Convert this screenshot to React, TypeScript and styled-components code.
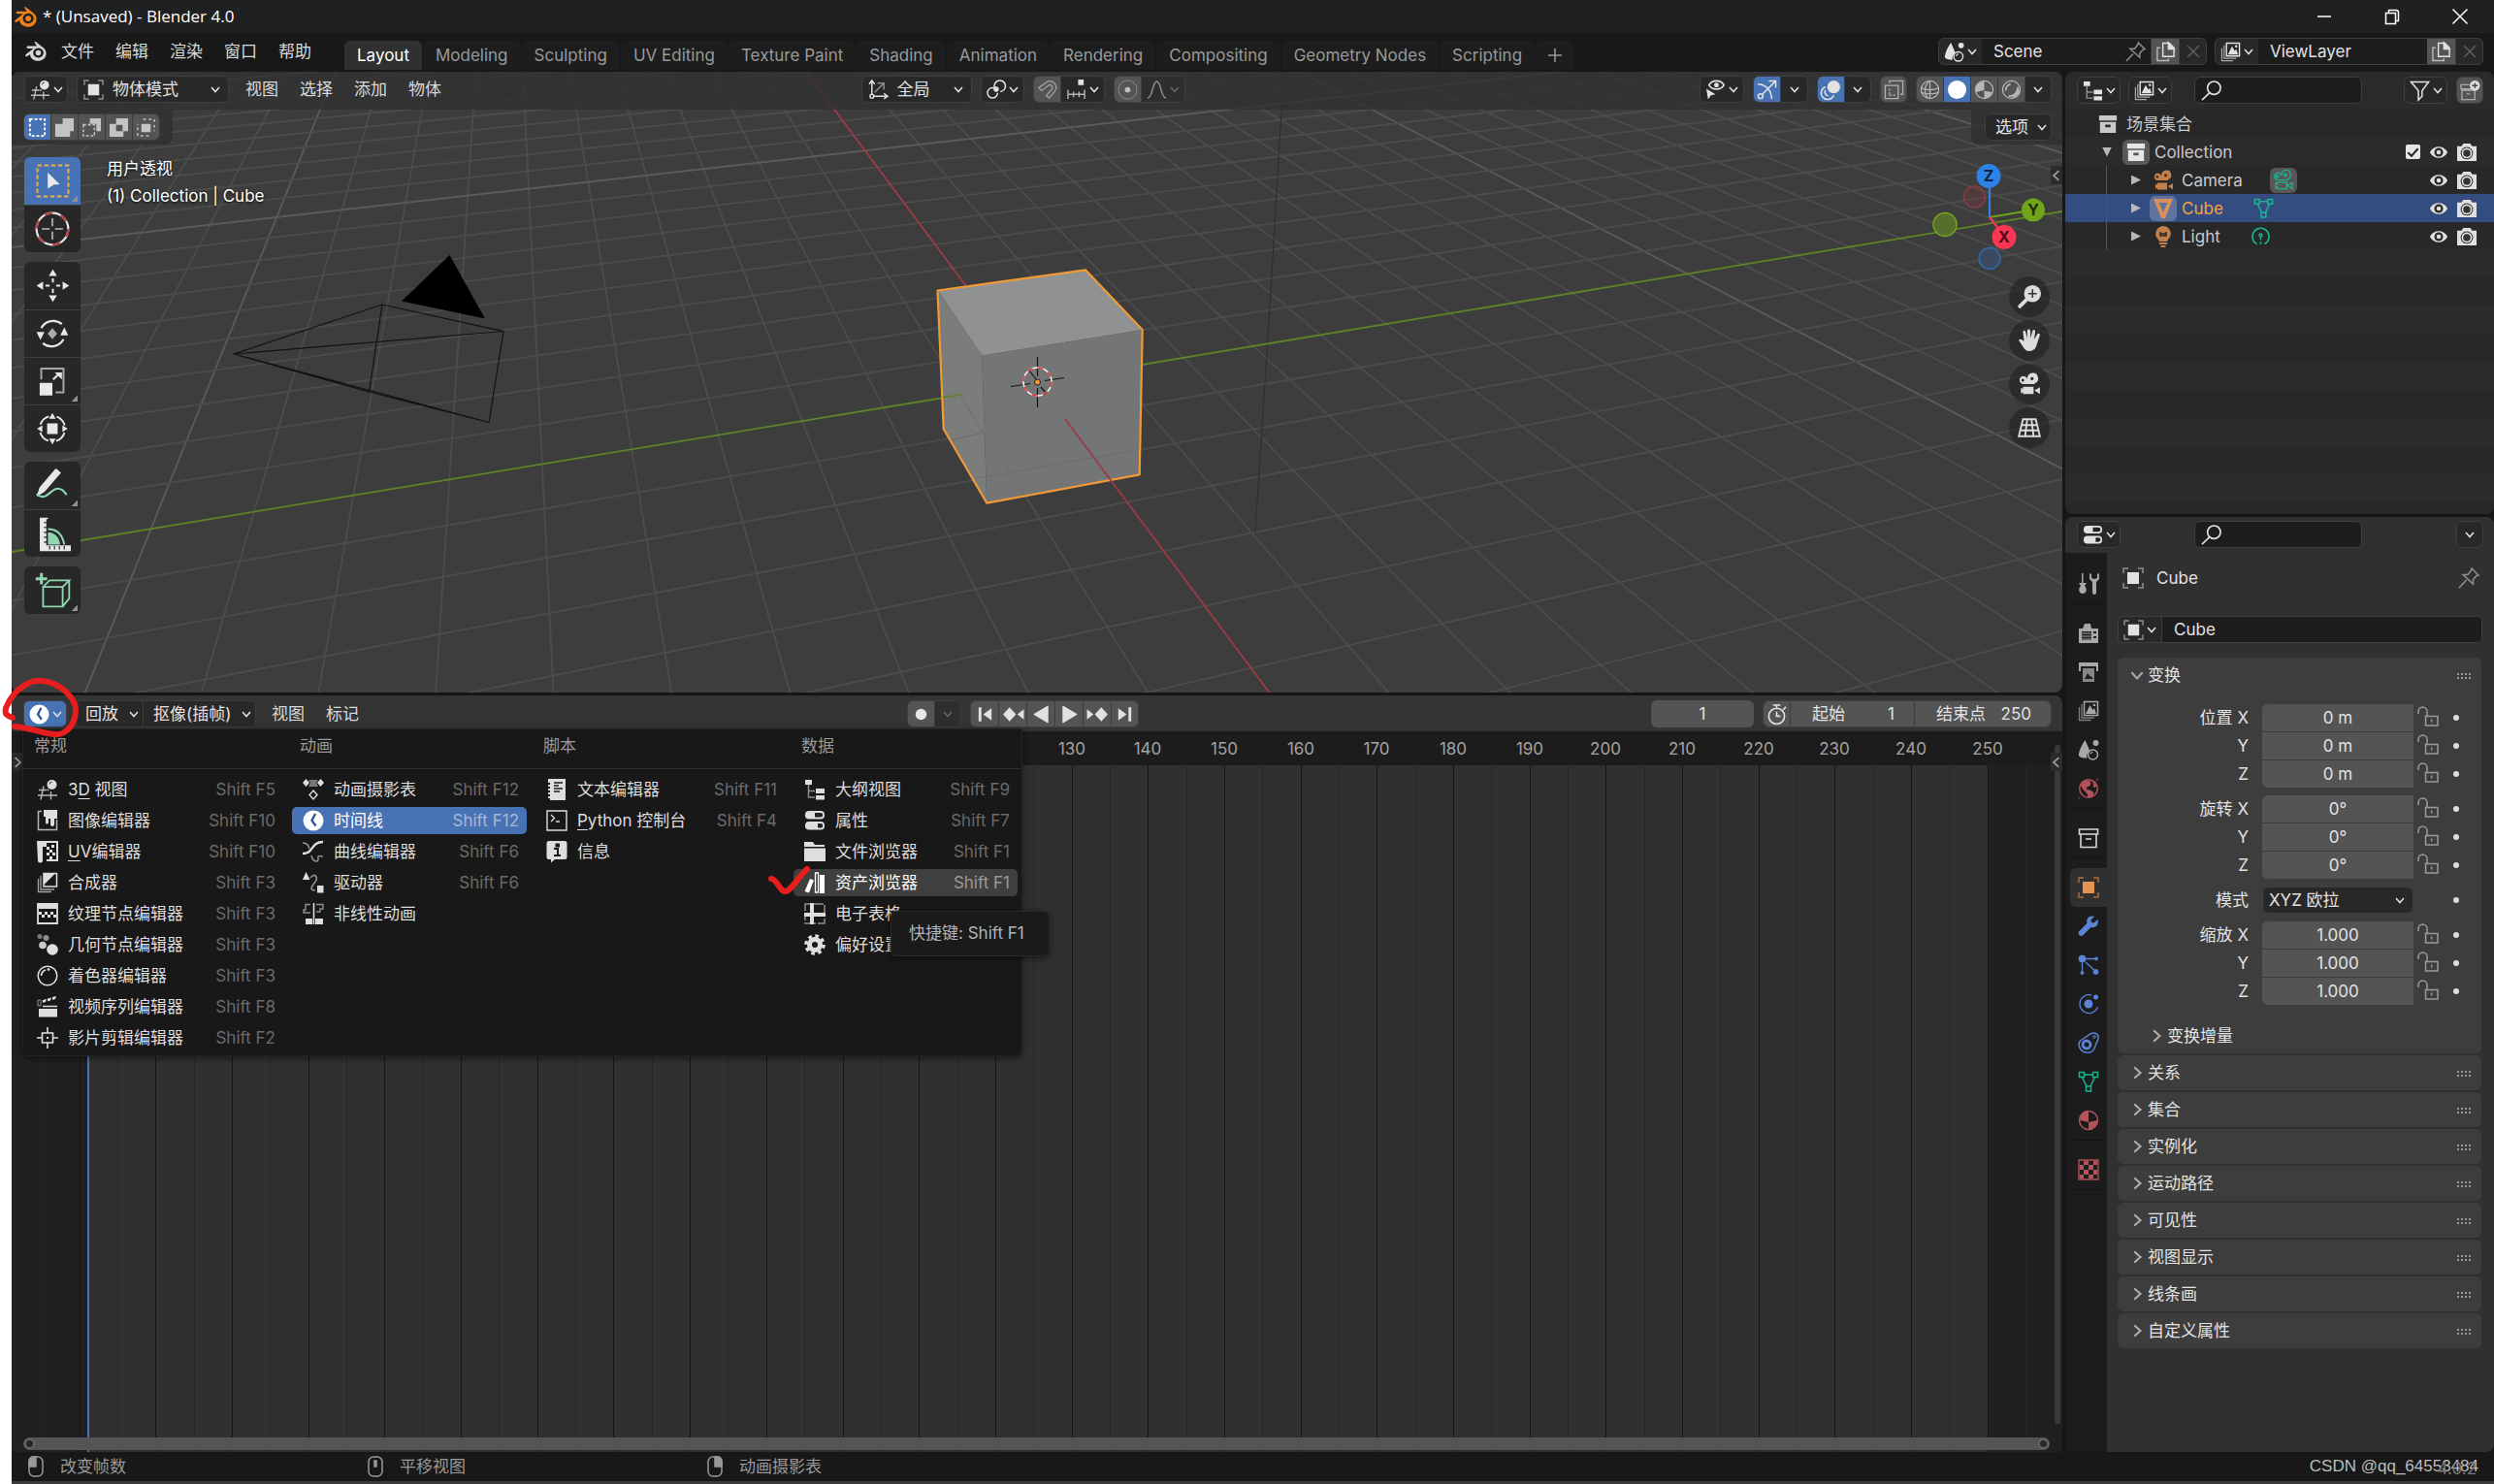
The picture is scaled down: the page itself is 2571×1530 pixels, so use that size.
import React from 'react';
import styled, { createGlobalStyle, css } from 'styled-components';

const GlobalStyle = createGlobalStyle`
  * { box-sizing: border-box; }
  body { margin: 0; background: #fff; }
  body, button, input, select {
    font-family: Inter, "Noto Sans CJK SC", sans-serif;
    font-size: 17px;
    line-height: 24px;
  }
  button, input, select { margin: 0; padding: 0; border: 0; color: inherit; background: none; outline: 0; }
`;

/* ---------- icons, drawn on a 22 unit grid ---------- */

const G = '#8f8f8f';
const F = 'currentColor';

const CameraShape = ({ outline }: { outline?: boolean }) => (
  <g fill={outline ? 'none' : F} stroke={outline ? F : 'none'} strokeWidth="1.3" fillRule="evenodd">
    <path d="M14 0.5a5 5 0 0 1 2 9.7v.8H4.500a3.800 3.800 0 1 1 4.600-4.800A5 5 0 0 1 14 .5zM13.500 4.300a1.500 1.500 0 1 0 .01 0zM4.800 6a1.300 1.300 0 1 0 .01 0z" />
    <path d="M5 13.500h10v7H5v-2l-2 1.500v-5.500l2 1zM15.800 17l5.200-3v6.500z" />
  </g>
);

const StackShape = () => (
  <g fill="none" stroke={F}>
    <path d="M6.500 1.500h14v14h-14z" strokeWidth="1.500" />
    <path d="M8 14l4.500-9 3 5 1.500-2 2 6z" fill={F} stroke="none" />
    <circle cx="17" cy="5" r="1.300" fill={F} stroke="none" />
    <path d="M4 4v14h13M1.500 7v13.500h12" stroke={F} opacity=".7" strokeWidth="1.300" />
  </g>
);

const SceneShape = () => (
  <g>
    <path d="M7.500 1l4.800 11a6 6 0 0 0-2.800 7.500C4 20 .8 18 .8 16 2 10 4 6 7.500 1z" fill={F} />
    <circle cx="18.500" cy="4" r="3" fill={F} />
    <circle cx="15.500" cy="16" r="5" fill="none" stroke={F} strokeWidth="1.500" />
    <path d="M13 15.500a2.500 2.500 0 0 1 2.500-2" fill="none" stroke={F} strokeWidth="1.200" />
  </g>
);

const Brackets = ({ stroke = G }: { stroke?: string }) => (
  <path d="M1 6V1h5M16 1h5v5M21 16v5h-5M6 21H1v-5" fill="none" stroke={stroke} strokeWidth="1.500" />
);

const icons: Record<string, React.ReactNode> = {
  view3d: (
    <g>
      <circle cx="15.500" cy="6" r="5" fill={F} />
      <path d="M13 5.500A3 3 0 0 1 15.500 3" fill="none" stroke="#222" />
      <path d="M2 11.500h8M1 17h20M7 7.500L4 21.500M14.500 13v8.500M10.500 11.500h2" fill="none" stroke={F} opacity=".8" strokeWidth="1.400" />
    </g>
  ),
  object: <g><Brackets /><path d="M5 5h12v12H5z" fill={F} /></g>,
  objectTab: <g><Brackets stroke="#a96c3c" /><path d="M5 5h12v12H5z" fill={F} /></g>,
  orient: (
    <g fill="none" stroke={F} strokeWidth="1.500">
      <path d="M4 16V2M1 5l3-4 3 4M6 18h14M17 15l4 3-4 3" /><circle cx="4" cy="18" r="2" />
      <path d="M7 14l9-9M10 4h7v7" stroke={G} />
    </g>
  ),
  pivot: (
    <g fill="none" stroke={F} strokeWidth="1.600">
      <path d="M10 9.500a5.500 5.500 0 1 0 3 5M10 9.500a6 6 0 1 1 6 3.500" /><circle cx="11.500" cy="10.500" r="2" fill={F} />
    </g>
  ),
  magnet: (
    <path d="M2 9l8-6c6-4 14 3 9 10l-6 7-3-2.500 6-7c2-3-1-6-4-4L5 12z" fill="none" stroke="#a0a0a0" strokeWidth="1.400" />
  ),
  snap: (
    <g fill={F}><path d="M13 0h6v6h-6z" /><path d="M2 11v10M8 13v6M14 13v6M20 11v10M2 16h18" stroke={F} opacity=".75" strokeWidth="1.500" fill="none" /></g>
  ),
  prop: <g><circle cx="11" cy="11" r="10" fill="none" stroke="#8a8a8a" /><circle cx="11" cy="11" r="3" fill="#c0c0c0" /></g>,
  curve: <path d="M1 20c6 0 5-18 10-18s4 18 10 18" fill="none" stroke="#8f8f8f" strokeWidth="1.600" />,
  vis: (
    <g><path d="M4 6c3-6 13-6 16 0-3 6-13 6-16 0z" fill="none" stroke={F} strokeWidth="1.700" /><circle cx="12" cy="6" r="2.600" fill={F} /><path d="M1 10l10 6-5 1-3 4.500z" fill={F} /></g>
  ),
  gizmo: (
    <g fill="none" stroke={F} strokeWidth="1.600"><path d="M6 16L20 2M13 1.500h7.500V9M1 5c8 0 15 6 15 16" /><circle cx="4" cy="18" r="2.500" /></g>
  ),
  overlay: (
    <g><circle cx="14" cy="8" r="7" fill={F} /><path d="M5 8a7 7 0 1 0 9 9M8 17.500a4 4 0 0 1-3-6" fill="none" stroke={F} strokeWidth="1.600" /></g>
  ),
  xray: (
    <g fill="none" stroke="#b0b0b0" strokeWidth="1.400"><path d="M1.500 6.500h14v14h-14zM6 4V1.500h14.500V16H18" /><path d="M6 10v7M6 17h6" strokeDasharray="2 2" /></g>
  ),
  wire: (
    <g fill="none" stroke="#b5b5b5" strokeWidth="1.300"><circle cx="11" cy="11" r="9.500" /><path d="M1.500 9c5 3 14 3 19 0M1.500 14c5 2 14 2 19 0M11 1.500v19M10 2C4 7 5 17 9 20" /></g>
  ),
  solid: <circle cx="11" cy="11" r="10" fill="#fff" />,
  matprev: (
    <g><circle cx="11" cy="11" r="9.500" fill="none" stroke="#b5b5b5" strokeWidth="1.300" /><path d="M11 1.500v10l-9 2A9.500 9.500 0 0 1 11 1.500zM11 12l9 2a9.500 9.500 0 0 1-9 6.500z" fill="#b5b5b5" /></g>
  ),
  rendered: (
    <g><circle cx="11" cy="11" r="9.500" fill="none" stroke="#b5b5b5" strokeWidth="1.300" /><path d="M5 12a6.500 6.500 0 0 1 5-7M8 18c6 0 10-4 10-10M12 19c4-1 7-4 7-8" fill="none" stroke="#b5b5b5" strokeWidth="2" /></g>
  ),
  scene: <SceneShape />,
  layers: <StackShape />,
  newdoc: (
    <g fill="none" stroke={F} strokeWidth="1.500"><path d="M8 1.500h7l5 5V16H8z" /><path d="M14 1v7h6z" fill={F} /><path d="M5 6.500H2v14h12V18" opacity=".7" /></g>
  ),
  close: <path d="M4 4l14 14M18 4L4 18" stroke="#666" strokeWidth="1.400" />,
  pin: (
    <g fill="none" stroke="#8f8f8f" strokeWidth="1.500"><path d="M14 1l7 7-2 .5-3.500 4V17L5 7.500h5L13.500 3zM8.500 13L1 21" /></g>
  ),
  tree: (
    <g fill={F}><path d="M1 1h7v5H1zM12 10h9v5h-9zM12 17h9v4.500h-9z" /><path d="M4.500 6v13H11M4.500 12.500H11" fill="none" stroke={G} strokeWidth="1.500" /></g>
  ),
  search: <g fill="none" stroke={F} strokeWidth="1.700"><circle cx="14" cy="8" r="7" /><path d="M9 13.500L1 21" /></g>,
  filter: <path d="M1.500 1.500h19L13.500 11v6l-4 4V11z" fill="none" stroke={F} strokeWidth="1.600" />,
  newcol: (
    <g fill="none" stroke="#aaa" strokeWidth="1.400"><path d="M2 10.500h14v10H2zM12 9H1V4.500h9M7 14.500h4" /><circle cx="16" cy="5.500" r="5.500" fill="#ddd" stroke="none" /><path d="M16 2.500v6M13 5.500h6" stroke="#444" /></g>
  ),
  collection: (
    <g fill={F} fillRule="evenodd"><path d="M1 1h20v6H1z" /><path d="M2 8.500h18V21H2zm6 3v3h6v-3z" /></g>
  ),
  collectionTab: (
    <g fill="none" stroke={F} strokeWidth="1.600"><path d="M1.500 2h19v5h-19zM3 7v13.500h16V7M8 12h6" /></g>
  ),
  camera: <CameraShape />,
  cameraData: <CameraShape outline />,
  meshObj: <path d="M1 1h20l-8 20H9zM6.500 5L11 15l4.500-10z" fill={F} fillRule="evenodd" />,
  mesh: (
    <g fill="none" stroke={F} strokeWidth="1.600"><path d="M1.500 1.500h5v5h-5zM15.500 1.500h5v5h-5zM8.500 16h5v5h-5zM6.500 4h9M4.500 6.500L9 16M17.500 6.500L13 16" /></g>
  ),
  bulb: (
    <g fill={F}><path d="M11 0a8 8 0 0 1 5 14l-1 2H7l-1-2A8 8 0 0 1 11 0z" /><path d="M7 18h8M8.500 21h5" stroke={F} strokeWidth="1.800" /><path d="M8 6v4h6V6M8 8h6" fill="none" stroke="#282828" strokeWidth="1.400" /></g>
  ),
  lightData: (
    <g fill="none" stroke={F} strokeWidth="1.600"><path d="M7 19.500a9 9 0 1 1 8 0" /><circle cx="11" cy="10" r="1.500" /><path d="M11 12v9.500" strokeDasharray="3 2" /></g>
  ),
  eye: (
    <g><path d="M1 11c4-8.500 16-8.500 20 0-4 8.500-16 8.500-20 0z" fill={F} /><circle cx="11" cy="11" r="5" fill="#2a2a2a" /><circle cx="11" cy="11" r="2.500" fill={F} /></g>
  ),
  shot: (
    <g><path d="M0 4h5l2-3h8l2 3h5v17H0z" fill={F} /><circle cx="11" cy="12" r="7" fill="#333" /><circle cx="11" cy="12" r="5" fill="none" stroke={F} strokeWidth="1.800" /></g>
  ),
  props: (
    <g fill={F}><rect x="1" y="1" width="20" height="8.500" rx="4" /><rect x="1" y="12" width="20" height="8.500" rx="4" /><path d="M11 3h6a2.200 2.200 0 0 1 0 4.500h-6zM14 14h3a2.200 2.200 0 0 1 0 4.500h-3z" fill="#222" /></g>
  ),
  tool: (
    <g fill={F}><path d="M4 0h1.500v10H9l-2 3c3 3 2 8-2 8s-5-5-2-8l-2-3h3z" /><path d="M12 0v6l3 3v11a2 2 0 0 0 4 0V9l3-3V0l-2 1v4l-3 1-3-1V1z" /></g>
  ),
  render: (
    <g fillRule="evenodd"><path d="M1 6h4l2-5h6l1 5h7v15H1zM4 9v9h10V9z" fill={F} /><path d="M4 11h10M4 14h10M4 17h10" stroke={F} /><path d="M16 10h3M16 15h3" stroke="#1d1d1d" strokeWidth="2" /></g>
  ),
  output: (
    <g fill={F}><path d="M1 1h20v9h-2V5H3v5H1z" /><path d="M5 7h12v14H5z" opacity=".75" /><path d="M7 18l3-6 3 4 1-1 1.500 3z" fill="#1d1d1d" /></g>
  ),
  world: (
    <g><circle cx="11" cy="11" r="9.300" fill="none" stroke={F} strokeWidth="1.500" /><path d="M3 7l5-4 5 1-1 4-3 1-1 3 4 1 4 2-1 4-4 1-1-4-4-4zM16 4l3 4-2 2zM2 20l-1 1.500M19 3l2-2.500" fill={F} stroke={F} /></g>
  ),
  wrench: <path d="M20.500 4l-4 3.500-2.500-.5-.5-2.500L17 .8c-5-1.500-9 2-7.500 7L1 16.500c-1.500 2.500 1.500 5.500 4 4L13.500 12c5 1.500 8.500-3 7-8z" fill={F} />,
  particles: (
    <g fill={F} stroke={F}><circle cx="4.500" cy="4.500" r="3.500" /><path d="M4.500 4.500h15M4.500 4.500v14M8 8l11 10" fill="none" strokeWidth="1.300" /><circle cx="19" cy="4.500" r="1.500" /><circle cx="4.500" cy="19" r="1.500" /><circle cx="18.500" cy="18" r="2.500" /></g>
  ),
  physics: (
    <g><circle cx="11" cy="11" r="4.500" fill={F} /><circle cx="18.500" cy="4" r="2.500" fill={F} /><path d="M14 2A9.500 9.500 0 1 0 20.500 14" fill="none" stroke={F} strokeWidth="1.300" /></g>
  ),
  constraint: (
    <g fill="none" stroke={F}><path d="M2.500 9L13 2c5-3 9 1 8 5l-4 10c-3 6-11 5-14 1s-2-7-.5-9z" strokeWidth="1.500" /><circle cx="9" cy="13" r="4" strokeWidth="2.800" /><circle cx="17" cy="5" r="1.300" /></g>
  ),
  material: (
    <g><circle cx="11" cy="11" r="9.500" fill="none" stroke={F} strokeWidth="1.500" /><path d="M11 1.500V13l-9-2A9.500 9.500 0 0 1 11 1.500zM11 13l9-2a9.500 9.500 0 0 1-9 9.500z" fill={F} /></g>
  ),
  texture: (
    <g><path d="M1 1h20v20H1z" fill="none" stroke={F} strokeWidth="1.300" /><path d="M6 2h5v4H6zM16 2h4v4h-4zM2 6h4v5H2zM11 6h5v5h-5zM6 11h5v5H6zM16 11h4v5h-4zM2 16h4v4H2zM11 16h5v4h-5z" fill={F} /></g>
  ),
  lock: <path d="M1 7V4.500a4.500 4.500 0 0 1 9 0V9M8.500 9.500h12.500v9.500H8.500zM14.700 12.500v3" fill="none" stroke="#9a9a9a" strokeWidth="1.500" />,
  image: (
    <g><path d="M5 1.500H1.500v19h19V10" fill="none" stroke={F} opacity=".8" strokeWidth="1.500" /><path d="M7 0h14v9h-3v6a1.500 1.500 0 0 1-4 0V9h-2v4a1.500 1.500 0 0 1-3 0V7H7z" fill={F} /></g>
  ),
  uv: (
    <g fill={F}><path d="M0 0h22v21H10v-2h10V2H10v4H6v14a1.500 1.500 0 0 1-5 0z" /><path d="M10 6h3v3h-3zM15 4h3v3h-3zM13 9h3v3h-3zM10 12h3v3h-3zM16 12h3v3h-3zM13 16h3v3h-3z" /></g>
  ),
  comp: (
    <g fill="none" stroke={F}><path d="M7 1.500h13.500V15H7z" strokeWidth="1.500" /><path d="M7 13.500V1.500h12z" fill={F} stroke="none" /><path d="M4 4v14h14M1.500 7v13.500H15" opacity=".7" strokeWidth="1.300" /></g>
  ),
  texnode: (
    <g><path d="M1 1h20v20H1z" fill="none" stroke={F} strokeWidth="1.800" /><path d="M1 1h20v5H1z" fill={F} /><path d="M2 9h3v3H2zM8 9h3v3H8zM14 9h3v3h-3zM5 12h3v3H5zM11 12h3v3h-3zM17 12h3v3h-3z" fill={F} /></g>
  ),
  geonode: (
    <g fill={F}><circle cx="3" cy="2.500" r="2.500" opacity=".5" /><circle cx="9.500" cy="4" r="3" opacity=".6" /><circle cx="6" cy="11.500" r="3.800" opacity=".9" /><circle cx="16" cy="16" r="5.800" /></g>
  ),
  shader: (
    <g fill="none" stroke={F}><circle cx="11" cy="11" r="9.800" strokeWidth="1.500" /><path d="M4.500 11A7 7 0 0 1 9 5" strokeWidth="1.800" /><circle cx="12" cy="4.500" r="1" fill={F} /></g>
  ),
  seq: (
    <g fill={F}><path d="M2 13h19v8.500H2z" /><path d="M6 10.500h15" stroke={F} strokeWidth="1.500" /><path d="M1 4h3v6H1z" fill="none" stroke={G} /><path d="M6 4l4-1-1 3-3 1zM11 2.500l4-1-1 3-3 1zM16 1l4-1-1 3-3 1z" /></g>
  ),
  clip: (
    <g fill="none" stroke={F} strokeWidth="1.600"><path d="M5.500 6h11v10h-11zM11 0v6M11 16v6M0 11h5.500M16.500 11H22" /><path d="M10 10h2v2h-2z" fill={F} stroke="none" /></g>
  ),
  dope: (
    <g fill={F}><path d="M3.500 0L7 4 3.500 8 0 4zM18.500 0L22 4l-3.500 4L15 4z" /><path d="M6 1h10l-2 3 2 4H6l2-4z" fill="#777" /><path d="M11 12l4 4.500-4 4.500-4-4.500z" fill="none" stroke={F} strokeWidth="1.400" /></g>
  ),
  time: <g><circle cx="11" cy="11" r="10.500" fill="#fff" /><path d="M13 4L9.500 11l4 5.500" fill="none" stroke="#32549a" strokeWidth="2.400" /></g>,
  graph: (
    <g fill="none" stroke={F}><path d="M0 13c12 0 8-12 21-12" strokeWidth="2.400" /><path d="M0 2c5 0 6 3 7 6M9 15c2 8 8 7 7 3s2-2 5-2" stroke={G} strokeWidth="1.600" /></g>
  ),
  driver: (
    <g fill={F}><path d="M3.500 0L7.500 8H0zM15 14h6.500v7.500H15z" /><path d="M8 6c5-6 8 0 5 4s-7 9 0 9" fill="none" stroke={G} strokeWidth="1.700" /></g>
  ),
  nla: (
    <g><path d="M8 1.500H3V7H1v3h7M14 1.500h7V6h-3v3h-4" fill="none" stroke={G} strokeWidth="1.400" /><path d="M3 16h7v6H3zM13 16h8v6h-8zM10.700 0h1.600v22h-1.600z" fill={F} /></g>
  ),
  text: (
    <g fill={F}><path d="M2 0h18v22H4v-2H2v-2h2v-2H2v-2h2v-2H2v-2h2V8H2V6h2V4H2z" /><path d="M8 4h9M8 7h5M8 10h9M8 13h6" stroke="#1a1a1a" strokeWidth="1.300" /></g>
  ),
  console: (
    <g fill="none" stroke={F}><path d="M1 1h20v20H1z" strokeWidth="1.400" /><path d="M5 5l3.500 3.500L5 12M10 12h4" strokeWidth="1.300" /></g>
  ),
  info: (
    <g fill={F}><path d="M3 0h16a2.500 2.500 0 0 1 2.500 2.500v14A2.500 2.500 0 0 1 19 19H9l-4 3.500V19H3A2.500 2.500 0 0 1 .5 16.500v-14A2.500 2.500 0 0 1 3 0z" /><path d="M8 8h4v7M8 15h7M10.500 3.500h2.500v2h-2.500z" fill="none" stroke="#1a1a1a" strokeWidth="2" /></g>
  ),
  file: <g fill={F}><path d="M0 1h9l2 3h10v2H0z" /><path d="M0 7.500h22V21H0z" /></g>,
  asset: (
    <g fill={F}><path d="M16 3h5v19h-5z" /><path d="M11.500 1h3v20h-3z" fill="none" stroke={F} strokeWidth="1.300" /><path d="M6 7l4 1.500L5 21.500 .5 20z" /></g>
  ),
  sheet: (
    <g><path d="M1 8V1h20v20H1v-7" fill="none" stroke={G} strokeWidth="1.500" strokeDasharray="12 2" /><path d="M6 0h4v10h12v4H10v8H6v-8H0v-4h6z" fill={F} /></g>
  ),
  gear: (
    <g fill="none" stroke={F}><circle cx="11" cy="11" r="5.500" strokeWidth="5" /><circle cx="11" cy="11" r="9" strokeWidth="3.500" strokeDasharray="3.600 3.470" /></g>
  ),
  stopwatch: (
    <g fill="none" stroke={F} strokeWidth="1.700"><circle cx="11" cy="13" r="8.500" /><path d="M11 4V1M7 1h8M18 6l3-3M11 8v5h4" /></g>
  ),
  zoomNav: (
    <g><circle cx="14" cy="8" r="8" fill={F} /><path d="M10 12l-8 8" stroke={F} strokeWidth="3.500" strokeLinecap="round" /><path d="M14 4v8M10 8h8" stroke="#333" strokeWidth="1.400" /></g>
  ),
  hand: (
    <path d="M1 11c1-2 3-1 5 1L5 3c0-2 2-2 2.500 0L9 9V2c0-2 3-2 3 0v7l2-7c.5-2 3-1 2.500 1L15.500 10l3-5c1-1.500 3-.5 2.500 1L18 15c-1 4-3 6-7 6-5 0-6-5-10-10z" fill={F} />
  ),
  grid: <path d="M5 3h12l4 16H1zM9 3L7 19M13 3l2 16M4 8.500h14M2.500 13.500h17" fill="none" stroke={F} strokeWidth="1.700" />,
  setNew: <path d="M3 2h16v18H3z" fill="none" stroke="#fff" strokeWidth="2" strokeDasharray="3 2" />,
  setExtend: <path d="M9 1h12v14h-4v6H1V7h8z" fill="#c4c4c4" />,
  setSub: <g><path d="M9 1h12v14h-5V7H9z" fill="#c4c4c4" /><path d="M2 8h12v12H2z" fill="none" stroke="#c4c4c4" strokeWidth="1.600" strokeDasharray="3 2" /></g>,
  setDiff: <path d="M8 1h13v14h-5v6H1V7h7zM8 8v7h7V8z" fill="#c4c4c4" fillRule="evenodd" />,
  setAnd: <g><path d="M6 7h10v9H6z" fill="#c4c4c4" /><path d="M8 2h12v13M14 20H2V7" fill="none" stroke="#c4c4c4" strokeWidth="1.600" strokeDasharray="3 3" /></g>,
  mouseL: <g fill="none" stroke={F} strokeWidth="1.500"><rect x="4" y="1" width="14" height="20" rx="5" /><path d="M4 11V5a4 4 0 0 1 4-4h3v10z" fill={F} /></g>,
  mouseM: <g fill="none" stroke={F} strokeWidth="1.500"><rect x="4" y="1" width="14" height="20" rx="5" /><rect x="10" y="5" width="2" height="6" fill={F} /></g>,
  mouseR: <g fill="none" stroke={F} strokeWidth="1.500"><rect x="4" y="1" width="14" height="20" rx="5" /><path d="M18 11V5a4 4 0 0 0-4-4h-3v10z" fill={F} /></g>,
  record: <circle cx="11" cy="11" r="6" fill={F} />,
  first: <path d="M4 3.500h3v15H4zM18 4.500v13L9 11z" fill={F} />,
  prevKey: <path d="M7 3.500l7 7.500-7 7.500L0 11zM22.500 5.500v11L15.500 11z" fill={F} />,
  playBack: <path d="M18 2v18L3 11z" fill={F} strokeLinejoin="round" stroke={F} />,
  play: <path d="M4 2v18l15-9z" fill={F} strokeLinejoin="round" stroke={F} />,
  nextKey: <path d="M15 3.500l7 7.500-7 7.500L8 11zM-.5 5.500v11L6.500 11z" fill={F} />,
  last: <path d="M15 3.500h3v15h-3zM4 4.500v13L13 11z" fill={F} />,
  blender: (
    <g fillRule="evenodd" fill={F}>
      <path d="M9.500 1.500c.8-.8 2-.2 2.500.4l7 5.600c3.500 3 3.500 8.500 0 11.300-3.500 2.800-9 2.700-12-.3-1.300-1.300-2-3-2-4.500l-2.800 2c-1.500.8-2.700-.7-1.500-1.900L8.500 8H3c-2 0-2-2.400 0-2.400h9zM13.500 7.500a5.300 5 0 1 0 .01 0z" />
      <circle cx="13.500" cy="12.500" r="2.800" />
    </g>
  ),
  min: <path d="M4 11h14" stroke="#fff" strokeWidth="1.500" />,
  restore: <path d="M4.500 7.500h10v11h-10zM7.500 7V4.500h7.500a2.500 2.500 0 0 1 2.500 2.500v8.500H15" fill="none" stroke="#fff" strokeWidth="1.500" />,
  quit: <path d="M3.500 3.500l15 15M18.500 3.500l-15 15" stroke="#fff" strokeWidth="1.500" />,
  /* tool shelf */
  tSelect: <g><path d="M2 2h18v18H2z" fill="none" stroke="#f0b04a" strokeWidth="1.100" strokeDasharray="2.500 1.500" /><path d="M8 6l7 7-3.500.3L8 15.500z" fill={F} /></g>,
  tCursor: <g fill="none"><circle cx="11" cy="11" r="9" stroke="#e8e8e8" strokeWidth="1.200" /><circle cx="11" cy="11" r="9" stroke="#b8474c" strokeWidth="1.300" strokeDasharray="4.700 4.700" /><path d="M11 5v4.500M11 12.500V17M5 11h4.500M12.500 11H17" stroke="#bbb" strokeWidth=".9" /></g>,
  tMove: <g fill={F}><path d="M11 1l2.500 4h-5zM11 21l2.500-4h-5zM1 11l4-2.500v5zM21 11l-4-2.500v5z" /><path d="M11 6.500V9M11 13v2.500M6.500 11H9M13 11h2.500" stroke={F} strokeWidth="1.200" /></g>,
  tRotate: <g fill={F}><path d="M4 7.500A8.500 8.500 0 0 1 17 5M18 14.500A8.500 8.500 0 0 1 5 17" fill="none" stroke={F} strokeWidth="1.300" /><path d="M1 10h5l-2.500 5zM16 12h5l-2.500-5z" /><path d="M11 7.500l3 3.500-3 3.500L8 11z" fill="#aaa" /></g>,
  tScale: <g fill={F}><path d="M3 12h8v8H3z" /><path d="M4 10V3h14v15h-5" fill="none" stroke="#a8a8a8" strokeWidth="1.200" /><path d="M11.500 10l3-3" stroke={F} strokeWidth="1.300" /><path d="M12.500 5.500H17V10z" /></g>,
  tTransform: <g fill={F}><circle cx="11" cy="11" r="8.500" fill="none" stroke={F} strokeWidth="1.200" strokeDasharray="8 5.350" strokeDashoffset="-2.700" /><path d="M7.500 7.500h7v7h-7zM11 .5l2.200 3.800H8.800zM11 21.500l2.200-3.800H8.800zM.8 11l3.500-2.200v4.400zM21.200 11l-3.500-2.200v4.400z" /></g>,
  tDraw: <g fill={F}><path d="M13 1.500l2.500 2L6.500 14l-4 2.500L4 12z" stroke={F} strokeWidth=".6" strokeLinejoin="round" /><path d="M2 15.500c5 5 8-3 12-3 3 0 4 2 5 3.500" fill="none" stroke="#8fd6b2" strokeWidth="1.200" /></g>,
  tMeasure: <g fill={F}><path d="M3 1h5v1H7v16h15v3.500H3z" /><path d="M8 8c6 0 9 4 10 9.500" fill="none" stroke="#8fd6b2" strokeWidth="1.200" /><path d="M8 10c4 0 7 3 7.500 7.500H8z" fill="#8fd6b2" /><path d="M5.500 4h2M5.500 7h2M5.500 10h2M5.500 13h2M5.500 16h2M9 18.500v2M12 18.500v2M15 18.500v2M18 18.500v2" stroke="#222" strokeWidth=".7" /></g>,
  tAdd: <g fill="none" stroke="#8fd6b2" strokeWidth="1.100"><path d="M5 9h12v12H5zM5 9l4-4h12l-4 4M21 5v11l-4 5" /><path d="M4 .5v7M.5 4h7" strokeWidth="1.800" /></g>,
};

const IconSvg = styled.svg<{ $s: number; $c?: string }>`
  width: ${p => p.$s}px;
  height: ${p => p.$s}px;
  flex: none;
  display: block;
  overflow: visible;
  ${p => p.$c && css`color: ${p.$c};`}
`;
const Icon = ({ n, s = 21, c }: { n: string; s?: number; c?: string }) => (
  <IconSvg viewBox="0 0 22 22" $s={s} $c={c} aria-hidden>{icons[n]}</IconSvg>
);

const ChevSvg = styled.svg<{ $s: number; $turn: number; $c?: string }>`
  width: ${p => p.$s}px;
  height: ${p => p.$s}px;
  flex: none;
  transform: rotate(${p => p.$turn}deg);
  color: ${p => p.$c || 'inherit'};
`;
const Chev = ({ s = 10, turn = 0, c }: { s?: number; turn?: number; c?: string }) => (
  <ChevSvg viewBox="0 0 10 10" $s={s} $turn={turn} $c={c} aria-hidden>
    <path d="M1 3l4 4.500L9 3" fill="none" stroke="currentColor" strokeWidth="1.500" />
  </ChevSvg>
);

/* ---------- shared controls ---------- */

const Group = styled.div<{ $dim?: boolean }>`
  display: flex;
  height: 28px;
  border: 1px solid #3f3f3f;
  border-radius: 6px;
  overflow: hidden;
  background: #282828;
  flex: none;
  ${p => p.$dim && css`background: #2e2e2e; color: #666;`}
`;
const Cell = styled.button<{ $w?: number; $tone?: 'on' | 'grey' | 'dark' }>`
  display: flex;
  align-items: center;
  justify-content: center;
  gap: 3px;
  width: ${p => (p.$w ? `${p.$w}px` : 'auto')};
  flex: none;
  background: ${p => (p.$tone === 'on' ? '#4772b3' : p.$tone === 'grey' ? '#545454' : 'transparent')};
  & + & { border-left: 1px solid #3d3d3d; }
`;
const DropCell = styled(Cell)`
  justify-content: space-between;
  padding: 0 4px 0 10px;
  white-space: nowrap;
`;
const Row = styled.div<{ $gap?: number; $end?: boolean }>`
  display: flex;
  align-items: center;
  gap: ${p => p.$gap ?? 9}px;
  ${p => p.$end && css`justify-content: flex-end;`}
`;
const Menus = styled(Row)`
  gap: 22px;
  margin-left: 8px;
`;
const MenuButton = styled.button`
  white-space: nowrap;
  color: #d9d9d9;
`;
const SelectBox = styled.label<{ $w: number }>`
  position: relative;
  display: flex;
  align-items: center;
  gap: 9px;
  width: ${p => p.$w}px;
  height: 28px;
  padding: 0 8px 0 6px;
  border: 1px solid #3f3f3f;
  border-radius: 6px;
  background: #282828;
  flex: none;
  select { appearance: none; flex: 1; min-width: 0; height: 26px; color: #e2e2e2; }
`;

/* ---------- window chrome ---------- */

const Page = styled.div`
  display: flex;
  flex-direction: column;
  min-height: 100vh;
  margin-left: 12px;
  background: #181818;
  border-bottom: 3px solid #3a3b3b;
  color: #e2e2e2;
`;
const TitleBar = styled.header`
  display: flex;
  align-items: center;
  height: 34px;
  padding: 0 24px 0 3px;
  gap: 6px;
  background: #1e2021;
  font-family: "Open Sans", sans-serif;
  font-size: 17px;
  color: #fff;
`;
const WinButtons = styled.div`
  margin-left: auto;
  display: flex;
  gap: 48px;
`;
const TopBar = styled.nav`
  display: flex;
  height: 40px;
  padding: 0 11px 0 14px;
`;
const FileMenus = styled(Row)`
  gap: 22px;
  height: 38px;
  margin-right: 34px;
`;
const Logo = styled.button`
  margin-right: -7px;
  color: #d5d5d5;
`;
const Tabs = styled.div`
  display: flex;
  gap: 1px;
  height: 30px;
  margin-top: 8px;
`;
const Tab = styled.button<{ $on?: boolean }>`
  padding: 0 13px;
  border-radius: 6px 6px 0 0;
  background: ${p => (p.$on ? '#303030' : '#1d1d1d')};
  color: ${p => (p.$on ? '#fff' : '#999')};
`;
const IdBlocks = styled(Row)`
  margin-left: auto;
  height: 38px;
  gap: 8px;
`;
const IdGroup = styled(Group)`
  width: 277px;
  color: #e2e2e2;
`;
const IdField = styled.input`
  flex: 1;
  min-width: 0;
  padding-left: 12px;
  background: #1d1d1d;
`;
const PinCell = styled(Cell)`
  background: #1d1d1d;
`;

/* ---------- areas ---------- */

const Main = styled.main`
  flex: 1;
  display: flex;
  gap: 3px;
  background: #161616;
`;
const LeftCol = styled.div`
  flex: 1;
  min-width: 0;
  display: flex;
  flex-direction: column;
  gap: 3px;
`;
const RightCol = styled.aside`
  width: 442px;
  flex: none;
  display: flex;
  flex-direction: column;
  gap: 3px;
`;
const Viewport = styled.section`
  position: relative;
  flex: 640 1 0;
  min-height: 640px;
  border-radius: 8px;
  overflow: hidden;
  background: #3d3d3d;
`;
const Backdrop = styled.svg`
  position: absolute;
  inset: 0;
  width: 100%;
  height: 100%;
`;
const Overlaid = styled.div`
  position: relative;
  display: flex;
  flex-direction: column;
`;
const ViewHeader = styled.div`
  display: grid;
  grid-template-columns: 864fr auto 895fr;
  align-items: start;
  height: 39px;
  padding: 4px 11px 0 13px;
  background: rgba(48, 48, 48, 0.8);
`;
const SubHeader = styled.div`
  display: flex;
  justify-content: space-between;
  height: 36px;
`;
const SubBox = styled.div<{ $right?: boolean }>`
  padding: ${p => (p.$right ? '4px 11px 0 14px' : '4px 13px 0 12px')};
  background: rgba(48, 48, 48, 0.8);
  border-radius: ${p => (p.$right ? '0 0 0 8px' : '0 0 8px 0')};
`;
const ViewBody = styled.div`
  display: flex;
  padding: 13px 13px 0;
`;
const Shelf = styled.div`
  display: flex;
  flex-direction: column;
  gap: 10px;
`;
const ShelfGroup = styled.div`
  display: flex;
  flex-direction: column;
  border-radius: 6px;
  overflow: hidden;
`;
const Tool = styled.button<{ $on?: boolean; $more?: boolean }>`
  display: flex;
  align-items: center;
  justify-content: center;
  width: 58px;
  height: 49px;
  background-color: ${p => (p.$on ? '#4772b3' : '#272727')};
  color: #e8e8e8;
  & + & { border-top: 1px solid #3d3d3d; }
  ${p => p.$more && css`
    background-image: linear-gradient(135deg, transparent 50%, #8f8f8f 50%);
    background-size: 6px 6px;
    background-repeat: no-repeat;
    background-position: right 3px bottom 3px;
  `}
`;
const ViewLabel = styled.div`
  margin-left: 27px;
  line-height: 24px;
  color: #fff;
  text-shadow: 0 1px 3px #000;
  p { margin: 0 0 4px; }
`;
const NavButtons = styled.div`
  display: flex;
  flex-direction: column;
  gap: 3px;
  margin: 123px 0 0 auto;
`;
const NavButton = styled.button`
  display: flex;
  align-items: center;
  justify-content: center;
  width: 42px;
  height: 42px;
  border-radius: 50%;
  background: rgba(30, 30, 30, 0.55);
  color: #dcdcdc;
`;
const SideTab = styled.button<{ $top: number; $left?: boolean }>`
  position: absolute;
  top: ${p => p.$top}px;
  ${p => (p.$left ? 'left: 0;' : 'right: 0;')}
  width: 12px;
  height: 19px;
  background: #2b2b2b;
  color: #999;
  display: flex;
  align-items: center;
`;

/* ---------- scene drawing ---------- */

const project = (x: number, y: number) => {
  const u = (y + 10) / 20;
  const v = (x + 10) / 10;
  const w = 1 + 0.233 * u - 0.3575 * v;
  return [(1425.6 * u - 185.16 * v + 285.2) / w, (-101.7 * u + 126.29 * v + 224) / w];
};
const gridLines = () => {
  const out: { p: number[]; q: number[]; major: boolean }[] = [];
  for (let y = -26; y <= 46; y++) {
    if (y === 0) continue;
    const u = (y + 10) / 20;
    const vMax = (0.92 + 0.233 * u) / 0.3575;
    out.push({ p: project(-46, y), q: project(vMax * 10 - 10, y), major: y % 10 === 0 });
  }
  for (let x = -26; x <= 12; x++) {
    if (x === 0) continue;
    const v = (x + 10) / 10;
    const uMin = Math.max(-2, (-0.92 + 0.3575 * v) / 0.233);
    out.push({ p: project(x, uMin * 20 - 10), q: project(x, 90), major: x % 10 === 0 });
  }
  return out;
};

const Scene3D = () => (
  <Backdrop viewBox="12 74 2114 640" preserveAspectRatio="xMidYMid slice" aria-label="3D scene">
    {gridLines().map((l, i) => (
      <line key={i} x1={l.p[0]} y1={l.p[1]} x2={l.q[0]} y2={l.q[1]} stroke={l.major ? '#5a5a5a' : '#4c4c4c'} strokeWidth={1.900} />
    ))}
    <path d="M1323.500 73L1310 300 1294 549" stroke="#2e2e2e" fill="none" />
    <path d="M12 569L985 408M1177 376L2126 218" stroke="#5d8426" strokeWidth="1.800" />
    <path d="M831 74L996 295" stroke="#9a3c48" strokeWidth="1.800" />
    <path d="M1177.700 340L1119 278.300 966.700 299.300 1012.300 366.700z" fill="#8f9193" />
    <path d="M966.700 299.300L1012.300 366.700 1017.300 518.700 972.700 442.300z" fill="#7b7d7b" />
    <path d="M1012.300 366.700L1177.700 340 1174.700 489.300 1017.300 518.700z" fill="#737577" />
    <path d="M1009 493L1176 463M1013 446L1058 513M980 454L1013 446M990 407L1013 446" stroke="#6c6e6c" />
    <path d="M966.500 299.500L1119 278.300 1177.700 340 1174.700 489.300 1017.300 518.700 972.700 442.300z" fill="none" stroke="#f09a36" strokeWidth="2.200" strokeLinejoin="round" />
    <path d="M972 409.500L990 407" stroke="#5d8426" strokeWidth="1.600" />
    <path d="M1098 432L1308.500 714" stroke="#9a3c48" strokeWidth="1.800" />
    <path d="M1069.500 368v20M1069.500 400v20M1042 398.500l20-3M1077 392.500l20-3M1061 382l7 9M1073 399l6 7" stroke="#161616" strokeWidth="1.200" />
    <circle cx="1069.500" cy="393.500" r="14.500" fill="none" stroke="#f2f2f2" strokeWidth="1.600" />
    <circle cx="1069.500" cy="393.500" r="14.500" fill="none" stroke="#e03a34" strokeWidth="1.600" strokeDasharray="5.700 5.700" />
    <circle cx="1069.500" cy="394" r="3" fill="#f29a2e" stroke="#222" />
    <path d="M241 365L394 314 519 341.500 504 435.500zM241 365L519 341.500M394 314L380.500 404 241 365M380.500 404L504 435.500" fill="none" stroke="#111" strokeWidth="1.200" />
    <path d="M463.500 263L500 328.500 414 310.500z" fill="#000" />
  </Backdrop>
);

const GizmoSvg = styled.svg`
  position: absolute;
  top: 90px;
  right: 11px;
  width: 130px;
  height: 120px;
  font-family: Inter, sans-serif;
  font-size: 16px;
  font-weight: 700;
  text-anchor: middle;
`;
const AxisGizmo = () => (
  <GizmoSvg viewBox="1985 164 130 120" aria-label="Axes">
    <path d="M2051 190V224" stroke="#3680dd" strokeWidth="2.200" />
    <path d="M2051 224L2090 217.500" stroke="#6ea31c" strokeWidth="2.200" />
    <path d="M2051 224L2062 238" stroke="#f43552" strokeWidth="2.200" />
    <circle cx="2035.500" cy="203" r="11" fill="#a0303e33" stroke="#8c3b46" strokeWidth="1.500" />
    <circle cx="2005" cy="231.500" r="12" fill="#55702c" stroke="#75a31f" strokeWidth="1.500" />
    <circle cx="2051" cy="266.500" r="11" fill="#3b4a60" stroke="#3268b2" strokeWidth="1.500" />
    <circle cx="2050" cy="181.500" r="12.500" fill="#2d82e6" />
    <circle cx="2096" cy="216.500" r="12" fill="#6fa41b" />
    <circle cx="2066" cy="244.500" r="12.500" fill="#fb3554" />
    <text x="2050" y="187" fill="#0d2440">Z</text>
    <text x="2096" y="222" fill="#1e2e08">Y</text>
    <text x="2066" y="250" fill="#4a0c16">X</text>
  </GizmoSvg>
);

/* ---------- timeline ---------- */

const Timeline = styled.section`
  position: relative;
  flex: 780 1 0;
  display: flex;
  flex-direction: column;
  border-radius: 8px;
  background: #202020;
`;
const TimeHeader = styled.div`
  display: grid;
  grid-template-columns: 912fr auto 942fr;
  align-items: start;
  height: 37px;
  padding: 5px 11px 0 12px;
  background: #343434;
  border-radius: 8px 8px 0 0;
`;
const TransportGroup = styled(Group)`
  background: #545454;
`;
const NumBox = styled.label<{ $w: number }>`
  display: flex;
  align-items: center;
  justify-content: space-between;
  width: ${p => p.$w}px;
  padding: 0 20px 0 22px;
  background: #545454;
  border-left: 1px solid #3d3d3d;
  white-space: nowrap;
  input { width: 36px; text-align: right; }
`;
const FrameField = styled.input`
  width: 106px;
  height: 28px;
  border-radius: 6px;
  background: #545454;
  text-align: center;
  margin-right: 9px;
`;
const Track = styled.svg`
  position: absolute;
  left: 0;
  top: 37px;
  width: 100%;
  height: calc(100% - 37px);
  font-size: 17px;
`;
const TrackArea = styled.div`
  flex: 1;
  display: flex;
  align-items: flex-end;
  padding: 0 13px 2px 12px;
`;
const HScroll = styled.div`
  position: relative;
  flex: 1;
  display: flex;
  justify-content: space-between;
  height: 13px;
  border-radius: 7px;
  background: #545454;
`;
const Knob = styled.i`
  width: 11px;
  height: 11px;
  margin: 1px;
  border-radius: 50%;
  background: #262626;
  border: 2px solid #666;
`;
const VScroll = styled.div`
  position: absolute;
  right: 2px;
  top: 51px;
  bottom: 29px;
  width: 6px;
  border-radius: 3px;
  background: #383838;
`;

const PX_PER_FRAME = 7.867;
const frameX = (f: number) => Math.round(69.800 + f * PX_PER_FRAME);
const TimelineTrack = () => {
  const minor = Array.from({ length: 54 }, (_, i) => -5 + i * 5);
  return (
    <Track aria-label="Frames">
      <rect width="100%" height="100%" fill="#202020" />
      <rect x={frameX(1)} width={frameX(250) - frameX(1)} height="100%" fill="#303030" />
      <rect width="100%" height="35" fill="#1c1c1c" />
      {minor.map(f => (
        <rect key={f} x={frameX(f)} y="35" width="1" height="100%" fill={f % 10 === 0 ? '#161616' : '#262626'} />
      ))}
      {[130, 140, 150, 160, 170, 180, 190, 200, 210, 220, 230, 240, 250].map(f => (
        <text key={f} x={frameX(f)} y="24" textAnchor="middle" fill="#a3a3a3">{f}</text>
      ))}
      <rect x={frameX(1)} y="0" width="2" height="100%" fill="#4772b3" />
    </Track>
  );
};

const Popup = styled.div`
  position: absolute;
  left: 11px;
  top: 34px;
  width: 1031px;
  height: 338px;
  border: 1px solid #242424;
  border-radius: 0 0 6px 6px;
  background: #181818;
  box-shadow: 0 2px 6px rgba(0, 0, 0, 0.5);
  display: grid;
  grid-template-columns: 265px 242px 257px 231px;
  column-gap: 9px;
  padding: 0 3px;
  align-content: start;
`;
const PopHead = styled.div`
  display: contents;
`;
const PopTitle = styled.div`
  height: 40px;
  padding: 5px 8px 0;
  color: #999;
`;
const PopRule = styled.hr`
  grid-column: 1 / -1;
  height: 1px;
  margin: 0 -3px 7px;
  border: 0;
  background: #2f2f2f;
`;
const PopList = styled.div`
  display: flex;
  flex-direction: column;
  gap: 4px;
`;
const PopItem = styled.button<{ $tone?: string }>`
  display: flex;
  align-items: center;
  gap: 10px;
  height: 28px;
  padding: 0 8px 0 11px;
  border-radius: 5px;
  white-space: nowrap;
  text-align: left;
  color: ${p => (p.$tone ? '#fff' : '#dedede')};
  background: ${p => (p.$tone === 'on' ? '#4772b3' : p.$tone === 'hover' ? '#3f3f3f' : 'transparent')};
  kbd { margin-left: auto; font: inherit; color: ${p => (p.$tone === 'on' ? '#a6b8d6' : p.$tone === 'hover' ? '#999' : '#6a6a6a')}; }
  u { text-underline-offset: 3px; }
`;
const Tooltip = styled.div`
  position: absolute;
  left: 906px;
  top: 222px;
  padding: 10px 20px 11px 18px;
  width: 164px;
  border: 1px solid #2a2a2a;
  border-radius: 6px;
  background: #1a1a1a;
  color: #b4b4b4;
  white-space: nowrap;
  box-shadow: 0 2px 6px rgba(0, 0, 0, 0.5);
`;

type Item = { icon: string; label: React.ReactNode; key?: string; tone?: string };
const editorMenu: { title: string; items: Item[] }[] = [
  {
    title: '常规',
    items: [
      { icon: 'view3d', label: <>3<u>D</u> 视图</>, key: 'Shift F5' },
      { icon: 'image', label: '图像编辑器', key: 'Shift F10' },
      { icon: 'uv', label: <><u>U</u>V编辑器</>, key: 'Shift F10' },
      { icon: 'comp', label: '合成器', key: 'Shift F3' },
      { icon: 'texnode', label: '纹理节点编辑器', key: 'Shift F3' },
      { icon: 'geonode', label: '几何节点编辑器', key: 'Shift F3' },
      { icon: 'shader', label: '着色器编辑器', key: 'Shift F3' },
      { icon: 'seq', label: '视频序列编辑器', key: 'Shift F8' },
      { icon: 'clip', label: '影片剪辑编辑器', key: 'Shift F2' },
    ],
  },
  {
    title: '动画',
    items: [
      { icon: 'dope', label: '动画摄影表', key: 'Shift F12' },
      { icon: 'time', label: '时间线', key: 'Shift F12', tone: 'on' },
      { icon: 'graph', label: '曲线编辑器', key: 'Shift F6' },
      { icon: 'driver', label: '驱动器', key: 'Shift F6' },
      { icon: 'nla', label: '非线性动画' },
    ],
  },
  {
    title: '脚本',
    items: [
      { icon: 'text', label: '文本编辑器', key: 'Shift F11' },
      { icon: 'console', label: <><u>P</u>ython 控制台</>, key: 'Shift F4' },
      { icon: 'info', label: '信息' },
    ],
  },
  {
    title: '数据',
    items: [
      { icon: 'tree', label: '大纲视图', key: 'Shift F9' },
      { icon: 'props', label: '属性', key: 'Shift F7' },
      { icon: 'file', label: '文件浏览器', key: 'Shift F1' },
      { icon: 'asset', label: '资产浏览器', key: 'Shift F1', tone: 'hover' },
      { icon: 'sheet', label: '电子表格' },
      { icon: 'gear', label: '偏好设置' },
    ],
  },
];

/* ---------- outliner ---------- */

const Outliner = styled.section`
  display: flex;
  flex-direction: column;
  height: 456px;
  border-radius: 8px;
  overflow: hidden;
  background: repeating-linear-gradient(#282828 0 29px, #2b2b2b 29px 58px) 0 38px;
`;
const SideHeader = styled.div`
  display: grid;
  grid-template-columns: 121px 173px 1fr;
  align-items: start;
  height: 39px;
  padding: 5px 11px 0 12px;
  background: #2a2a2a;
`;
const SearchBox = styled.label`
  display: flex;
  align-items: center;
  gap: 6px;
  height: 28px;
  padding: 0 6px;
  border: 1px solid #3f3f3f;
  border-radius: 6px;
  background: #1d1d1d;
  input { flex: 1; min-width: 0; }
`;
const TreeRow = styled.div<{ $indent: number; $sel?: boolean }>`
  position: relative;
  display: flex;
  align-items: center;
  height: 29px;
  padding: 0 18px 0 ${p => p.$indent}px;
  color: ${p => (p.$sel ? '#f2a33c' : '#c9c9c9')};
  background: ${p => (p.$sel ? '#334d80' : 'transparent')};
`;
const Guide = styled.i`
  position: absolute;
  left: 42px;
  top: 0;
  width: 1px;
  height: 29px;
  background: #555;
`;
const Arrow = styled.button<{ $open?: boolean }>`
  width: 10px;
  height: 10px;
  margin-right: ${p => (p.$open ? 11 : 9)}px;
  background: #b8b8b8;
  clip-path: ${p => (p.$open ? 'polygon(0 0, 100% 0, 50% 100%)' : 'polygon(0 0, 100% 50%, 0 100%)')};
`;
const IconPad = styled.span<{ $on?: boolean }>`
  display: flex;
  align-items: center;
  justify-content: center;
  width: 28px;
  height: 26px;
  border-radius: 6px;
  background: ${p => (p.$on ? 'rgba(255,255,255,.22)' : 'transparent')};
`;
const TreeName = styled.span`
  margin: 0 28px 0 5px;
`;
const Toggles = styled.div`
  display: flex;
  align-items: center;
  gap: 9px;
  margin-left: auto;
  color: #e0e0e0;
  button { display: block; }
`;
const TickBox = styled.input`
  appearance: none;
  width: 15px;
  height: 15px;
  border-radius: 2px;
  background: #e6e6e6;
  display: grid;
  place-items: center;
  &:checked::after {
    content: "";
    width: 9px;
    height: 4px;
    border: solid #222;
    border-width: 0 0 2px 2px;
    transform: translateY(-1px) rotate(-48deg);
  }
`;

/* ---------- properties ---------- */

const Properties = styled.section`
  flex: 1;
  display: flex;
  flex-direction: column;
  border-radius: 8px;
  overflow: hidden;
  background: #303030;
`;
const PropHeader = styled(SideHeader)`
  height: 37px;
  background: #303030;
  padding-top: 4px;
`;
const PropBody = styled.div`
  flex: 1;
  display: flex;
`;
const PropTabs = styled.div`
  width: 43px;
  padding: 12px 0 0 5px;
  background: #1c1c1c;
`;
const PropTab = styled.button<{ $on?: boolean }>`
  display: flex;
  align-items: center;
  width: 38px;
  height: 40px;
  padding-left: 8px;
  border-radius: 6px 0 0 6px;
  background: ${p => (p.$on ? '#303030' : 'transparent')};
`;
const TabRule = styled.hr`
  height: 1px;
  margin: 0 0 10px 3px;
  border: 0;
  background: #141414;
`;
const PropMain = styled.div`
  flex: 1;
  min-width: 0;
  display: flex;
  flex-direction: column;
  padding: 12px 12px 0 11px;
`;
const Crumb = styled.div`
  display: flex;
  align-items: center;
  height: 28px;
  padding: 0 3px 0 5px;
  gap: 13px;
  button { margin-left: auto; }
`;
const NameGroup = styled(Group)`
  margin: 25px 0 15px;
  input { flex: 1; background: #1d1d1d; padding-left: 12px; border-left: 1px solid #3d3d3d; }
`;
const Panel = styled.div`
  margin: 0 1px 2px 0;
  border-radius: 6px;
  background: #3d3d3d;
`;
const PanelHead = styled.button`
  display: flex;
  align-items: center;
  width: 100%;
  height: 36px;
  padding: 0 11px 0 13px;
  gap: 4px;
  text-align: left;
`;
const Dots = styled.i`
  width: 15px;
  height: 7px;
  margin-left: auto;
  background: radial-gradient(circle, #999 1px, transparent 1.500px) 0 0 / 4px 4px;
`;
const SubHead = styled(PanelHead)`
  padding-left: 33px;
  margin-top: 14px;
`;
const Fields = styled.div`
  display: flex;
  flex-direction: column;
  gap: 8px;
  padding-top: 12px;
`;
const FieldSet = styled.div`
  display: flex;
  flex-direction: column;
  gap: 1px;
`;
const FieldRow = styled.div`
  display: flex;
  align-items: center;
  height: 28px;
  > button { margin-left: 4px; }
`;
const FieldLabel = styled.label`
  width: 135px;
  margin-right: 14px;
  text-align: right;
`;
const FieldInput = styled.input<{ $pos: number }>`
  width: 156px;
  height: 28px;
  background: #545454;
  text-align: center;
  border-radius: ${p => (p.$pos === 0 ? '5px 0 0 0' : p.$pos === 2 ? '0 0 0 5px' : '0')};
`;
const KeyDot = styled.i`
  width: 6px;
  height: 6px;
  margin: 0 23px 0 auto;
  border-radius: 50%;
  background: #dcdcdc;
`;

const transform: { name: string; value: string; id: string }[] = [
  { name: '位置', value: '0 m', id: 'loc' },
  { name: '旋转', value: '0°', id: 'rot' },
  { name: '缩放', value: '1.000', id: 'scale' },
];

const VectorField = ({ name, value, id }: { name: string; value: string; id: string }) => (
  <FieldSet>
    {['X', 'Y', 'Z'].map((axis, i) => (
      <FieldRow key={axis}>
        <FieldLabel htmlFor={id + axis}>{i === 0 ? `${name} ${axis}` : axis}</FieldLabel>
        <FieldInput id={id + axis} $pos={i} defaultValue={value} />
        <button aria-label={`lock ${axis}`}><Icon n="lock" s={22} /></button>
        <KeyDot />
      </FieldRow>
    ))}
  </FieldSet>
);

const tabGroups: [string, string][][] = [
  [['tool', '#a8a8a8']],
  [['render', '#a8a8a8'], ['output', '#a8a8a8'], ['layers', '#a8a8a8'], ['scene', '#a8a8a8'], ['world', '#b3535b']],
  [['collectionTab', '#d8d8d8']],
  [['objectTab', '#e2934f'], ['wrench', '#5b83d6'], ['particles', '#5b83d6'], ['physics', '#5b83d6'], ['constraint', '#5b83d6'], ['mesh', '#13b38a'], ['material', '#b3535b']],
  [['texture', '#b3535b']],
];

/* ---------- status bar ---------- */

const StatusBar = styled.footer`
  display: flex;
  align-items: center;
  height: 30px;
  padding: 0 16px 0 14px;
  color: #999;
`;
const Hint = styled.div`
  display: flex;
  align-items: center;
  gap: 14px;
  width: 350px;
`;
const Credit = styled.div`
  position: relative;
  margin-left: auto;
  color: #bdbdbd;
  font-family: "Liberation Sans", sans-serif;
  font-size: 17px;
`;
const Version = styled.span`
  position: absolute;
  right: 2px;
  top: 2px;
  color: #777;
  font-family: Inter, sans-serif;
  font-size: 17px;
`;
const Scribble = styled.svg`
  position: absolute;
  left: 0;
  top: 690px;
  width: 860px;
  height: 240px;
  pointer-events: none;
`;

const tabs = ['Layout', 'Modeling', 'Sculpting', 'UV Editing', 'Texture Paint', 'Shading', 'Animation', 'Rendering', 'Compositing', 'Geometry Nodes', 'Scripting'];

export default function App() {
  return (
    <>
      <GlobalStyle />
      <Page>
        <TitleBar>
          <Icon n="blender" s={23} c="#f0801a" />
          <span>* (Unsaved) - Blender 4.0</span>
          <WinButtons>
            <button aria-label="Minimize"><Icon n="min" s={22} /></button>
            <button aria-label="Restore"><Icon n="restore" s={22} /></button>
            <button aria-label="Close"><Icon n="quit" s={22} /></button>
          </WinButtons>
        </TitleBar>

        <TopBar>
          <FileMenus>
            <Logo aria-label="Blender"><Icon n="blender" s={22} /></Logo>
            {['文件', '编辑', '渲染', '窗口', '帮助'].map(m => <MenuButton key={m}>{m}</MenuButton>)}
          </FileMenus>
          <Tabs>
            {tabs.map((t, i) => <Tab key={t} $on={i === 0}>{t}</Tab>)}
            <Tab aria-label="Add workspace">
              <IconSvg viewBox="0 0 14 14" $s={14}><path d="M7 0v14M0 7h14" stroke="currentColor" strokeWidth="1.500" /></IconSvg>
            </Tab>
          </Tabs>
          <IdBlocks>
            <IdGroup>
              <Cell $w={44} aria-label="Browse scene"><Icon n="scene" /><Chev /></Cell>
              <IdField aria-label="Scene" defaultValue="Scene" />
              <PinCell $w={32} aria-label="Pin"><Icon n="pin" /></PinCell>
              <Cell $w={29} $tone="grey" aria-label="New scene"><Icon n="newdoc" /></Cell>
              <Cell $w={28} aria-label="Delete scene"><Icon n="close" s={18} /></Cell>
            </IdGroup>
            <IdGroup>
              <Cell $w={44} aria-label="Browse layer"><Icon n="layers" /><Chev /></Cell>
              <IdField aria-label="View layer" defaultValue="ViewLayer" />
              <Cell $w={29} $tone="grey" aria-label="New layer"><Icon n="newdoc" /></Cell>
              <Cell $w={28} aria-label="Delete layer"><Icon n="close" s={18} /></Cell>
            </IdGroup>
          </IdBlocks>
        </TopBar>

        <Main>
          <LeftCol>
            <Viewport>
              <Scene3D />
              <Overlaid>
                <ViewHeader>
                  <Row>
                    <Group><Cell $w={43} aria-label="Editor type"><Icon n="view3d" /><Chev /></Cell></Group>
                    <SelectBox $w={157}>
                      <Icon n="object" />
                      <select aria-label="Mode"><option>物体模式</option></select>
                      <Chev />
                    </SelectBox>
                    <Menus>
                      {['视图', '选择', '添加', '物体'].map(m => <MenuButton key={m}>{m}</MenuButton>)}
                    </Menus>
                  </Row>
                  <Row>
                    <SelectBox $w={114}>
                      <Icon n="orient" />
                      <select aria-label="Orientation"><option>全局</option></select>
                      <Chev />
                    </SelectBox>
                    <Group><Cell $w={43} aria-label="Pivot"><Icon n="pivot" /><Chev /></Cell></Group>
                    <Group>
                      <Cell $w={27} $tone="grey" aria-label="Snap"><Icon n="magnet" /></Cell>
                      <Cell $w={45} aria-label="Snap to"><Icon n="snap" /><Chev /></Cell>
                    </Group>
                    <Group $dim>
                      <Cell $w={27} $tone="grey" aria-label="Proportional"><Icon n="prop" /></Cell>
                      <Cell $w={45} aria-label="Falloff"><Icon n="curve" /><Chev /></Cell>
                    </Group>
                  </Row>
                  <Row $end>
                    <Group><Cell $w={44} aria-label="Visibility"><Icon n="vis" /><Chev /></Cell></Group>
                    <Group>
                      <Cell $w={27} $tone="on" aria-label="Gizmos"><Icon n="gizmo" /></Cell>
                      <Cell $w={28} aria-label="Gizmo options"><Chev /></Cell>
                    </Group>
                    <Group>
                      <Cell $w={27} $tone="on" aria-label="Overlays"><Icon n="overlay" /></Cell>
                      <Cell $w={27} aria-label="Overlay options"><Chev /></Cell>
                    </Group>
                    <Group><Cell $w={26} $tone="grey" aria-label="X-ray"><Icon n="xray" /></Cell></Group>
                    <Group>
                      <Cell $w={27} $tone="grey" aria-label="Wireframe"><Icon n="wire" /></Cell>
                      <Cell $w={28} $tone="on" aria-label="Solid"><Icon n="solid" /></Cell>
                      <Cell $w={28} $tone="grey" aria-label="Material"><Icon n="matprev" /></Cell>
                      <Cell $w={28} $tone="grey" aria-label="Rendered"><Icon n="rendered" /></Cell>
                      <Cell $w={27} aria-label="Shading options"><Chev /></Cell>
                    </Group>
                  </Row>
                </ViewHeader>
                <SubHeader>
                  <SubBox>
                    <Group>
                      {['setNew', 'setExtend', 'setSub', 'setDiff', 'setAnd'].map((n, i) => (
                        <Cell key={n} $w={i === 0 ? 27 : 28} $tone={i === 0 ? 'on' : 'grey'} aria-label={n}><Icon n={n} /></Cell>
                      ))}
                    </Group>
                  </SubBox>
                  <SubBox $right>
                    <Group><DropCell $w={67}>选项<Chev /></DropCell></Group>
                  </SubBox>
                </SubHeader>
                <ViewBody>
                  <Shelf>
                    <ShelfGroup>
                      <Tool $on $more aria-label="Select"><Icon n="tSelect" s={39} /></Tool>
                      <Tool aria-label="Cursor"><Icon n="tCursor" s={40} /></Tool>
                    </ShelfGroup>
                    <ShelfGroup>
                      <Tool aria-label="Move"><Icon n="tMove" s={37} /></Tool>
                      <Tool aria-label="Rotate"><Icon n="tRotate" s={36} /></Tool>
                      <Tool $more aria-label="Scale"><Icon n="tScale" s={36} /></Tool>
                      <Tool aria-label="Transform"><Icon n="tTransform" s={34} /></Tool>
                    </ShelfGroup>
                    <ShelfGroup>
                      <Tool $more aria-label="Annotate"><Icon n="tDraw" s={40} /></Tool>
                      <Tool aria-label="Measure"><Icon n="tMeasure" s={37} /></Tool>
                    </ShelfGroup>
                    <ShelfGroup>
                      <Tool $more aria-label="Add cube"><Icon n="tAdd" s={37} /></Tool>
                    </ShelfGroup>
                  </Shelf>
                  <ViewLabel>
                    <p>用户透视</p>
                    <p>(1) Collection | Cube</p>
                  </ViewLabel>
                  <NavButtons>
                    {['zoomNav', 'hand', 'camera', 'grid'].map(n => (
                      <NavButton key={n} aria-label={n}><Icon n={n} s={24} /></NavButton>
                    ))}
                  </NavButtons>
                </ViewBody>
              </Overlaid>
              <AxisGizmo />
              <SideTab $top={97} aria-label="Sidebar"><Chev turn={90} s={12} /></SideTab>
            </Viewport>

            <Timeline>
              <TimelineTrack />
              <TimeHeader>
                <Row $gap={8}>
                  <Group><Cell $w={43} $tone="on" aria-label="Editor type"><Icon n="time" /><Chev /></Cell></Group>
                  <Group>
                    <DropCell $w={69}>回放<Chev /></DropCell>
                    <DropCell $w={116}>抠像(插帧)<Chev /></DropCell>
                  </Group>
                  <Menus>
                    <MenuButton>视图</MenuButton>
                    <MenuButton>标记</MenuButton>
                  </Menus>
                </Row>
                <Row>
                  <Group $dim>
                    <Cell $w={27} $tone="grey" aria-label="Auto keying"><Icon n="record" c="#e6e6e6" /></Cell>
                    <Cell $w={27} aria-label="Keying options"><Chev /></Cell>
                  </Group>
                  <TransportGroup>
                    {['first', 'prevKey', 'playBack', 'play', 'nextKey', 'last'].map((n, i) => (
                      <Cell key={n} $w={i === 0 || i === 5 ? 28 : 29} aria-label={n}><Icon n={n} /></Cell>
                    ))}
                  </TransportGroup>
                </Row>
                <Row $gap={0} $end>
                  <FrameField aria-label="Current frame" defaultValue="1" />
                  <Group>
                    <Cell $w={27} $tone="grey" aria-label="Preview range"><Icon n="stopwatch" /></Cell>
                    <NumBox $w={128}>起始<input defaultValue="1" /></NumBox>
                    <NumBox $w={141}>结束点<input defaultValue="250" /></NumBox>
                  </Group>
                </Row>
              </TimeHeader>
              <TrackArea>
                <HScroll><Knob /><Knob /></HScroll>
              </TrackArea>
              <VScroll />
              <SideTab $top={59} $left aria-label="Channels"><Chev turn={-90} s={12} /></SideTab>
              <SideTab $top={59} aria-label="Sidebar"><Chev turn={90} s={12} /></SideTab>
              <Popup>
                <PopHead>{editorMenu.map(c => <PopTitle key={c.title}>{c.title}</PopTitle>)}</PopHead>
                <PopRule />
                {editorMenu.map(c => (
                  <PopList key={c.title}>
                    {c.items.map(it => (
                      <PopItem key={it.icon} $tone={it.tone}>
                        <Icon n={it.icon} s={22} /><span>{it.label}</span>{it.key && <kbd>{it.key}</kbd>}
                      </PopItem>
                    ))}
                  </PopList>
                ))}
              </Popup>
              <Tooltip>快捷键: Shift F1</Tooltip>
            </Timeline>
          </LeftCol>

          <RightCol>
            <Outliner>
              <SideHeader>
                <Row $gap={8}>
                  <Group><Cell $w={43} aria-label="Editor type"><Icon n="tree" /><Chev /></Cell></Group>
                  <Group><Cell $w={43} aria-label="Display mode"><Icon n="layers" /><Chev /></Cell></Group>
                </Row>
                <SearchBox><Icon n="search" /><input aria-label="Search outliner" /></SearchBox>
                <Row $end>
                  <Group><Cell $w={43} aria-label="Filter"><Icon n="filter" /><Chev /></Cell></Group>
                  <Group><Cell $w={26} $tone="grey" aria-label="New collection"><Icon n="newcol" /></Cell></Group>
                </Row>
              </SideHeader>
              <TreeRow $indent={30}><IconPad><Icon n="collection" s={20} /></IconPad><TreeName>场景集合</TreeName></TreeRow>
              <TreeRow $indent={38}>
                <Arrow $open aria-label="Collapse" />
                <IconPad $on><Icon n="collection" s={20} c="#e6e6e6" /></IconPad>
                <TreeName>Collection</TreeName>
                <Toggles>
                  <TickBox type="checkbox" defaultChecked aria-label="Enable collection" />
                  <button aria-label="Hide"><Icon n="eye" s={20} /></button>
                  <button aria-label="Render"><Icon n="shot" s={20} /></button>
                </Toggles>
              </TreeRow>
              {[
                ['Camera', 'camera', 'cameraData'],
                ['Cube', 'meshObj', 'mesh'],
                ['Light', 'bulb', 'lightData'],
              ].map(([name, icon, data]) => (
                <TreeRow key={name} $indent={68} $sel={name === 'Cube'}>
                  <Guide />
                  <Arrow aria-label="Expand" />
                  <IconPad $on={name === 'Cube'}><Icon n={icon} s={22} c={name === 'Cube' ? '#dc8e5c' : '#c27f49'} /></IconPad>
                  <TreeName>{name}</TreeName>
                  <IconPad $on={name === 'Camera'}><Icon n={data} c="#1bb690" /></IconPad>
                  <Toggles>
                    <button aria-label="Hide"><Icon n="eye" s={20} /></button>
                    <button aria-label="Render"><Icon n="shot" s={20} /></button>
                  </Toggles>
                </TreeRow>
              ))}
            </Outliner>

            <Properties>
              <PropHeader>
                <Row><Group><Cell $w={43} aria-label="Editor type"><Icon n="props" /><Chev /></Cell></Group></Row>
                <SearchBox><Icon n="search" /><input aria-label="Search properties" /></SearchBox>
                <Row $end><Group><Cell $w={26} aria-label="Options"><Chev /></Cell></Group></Row>
              </PropHeader>
              <PropBody>
                <PropTabs>
                  {tabGroups.map((g, gi) => (
                    <React.Fragment key={gi}>
                      {g.map(([n, c]) => (
                        <PropTab key={n} $on={n === 'objectTab'} aria-label={n}><Icon n={n} s={22} c={c} /></PropTab>
                      ))}
                      <TabRule />
                    </React.Fragment>
                  ))}
                </PropTabs>
                <PropMain>
                  <Crumb>
                    <Icon n="object" s={22} /><span>Cube</span>
                    <button aria-label="Pin"><Icon n="pin" s={22} /></button>
                  </Crumb>
                  <NameGroup>
                    <Cell $w={44} aria-label="Browse object"><Icon n="object" /><Chev /></Cell>
                    <input aria-label="Object name" defaultValue="Cube" />
                  </NameGroup>
                  <Panel>
                    <PanelHead><Chev s={14} c="#aaa" />变换<Dots /></PanelHead>
                    <Fields>
                      <VectorField {...transform[0]} />
                      <VectorField {...transform[1]} />
                      <FieldRow>
                        <FieldLabel htmlFor="rotmode">模式</FieldLabel>
                        <SelectBox $w={156}>
                          <select id="rotmode"><option>XYZ 欧拉</option></select>
                          <Chev />
                        </SelectBox>
                        <KeyDot />
                      </FieldRow>
                      <VectorField {...transform[2]} />
                    </Fields>
                    <SubHead><Chev s={14} turn={-90} c="#aaa" />变换增量</SubHead>
                  </Panel>
                  {['关系', '集合', '实例化', '运动路径', '可见性', '视图显示', '线条画', '自定义属性'].map(t => (
                    <Panel key={t}><PanelHead><Chev s={14} turn={-90} c="#aaa" />{t}<Dots /></PanelHead></Panel>
                  ))}
                </PropMain>
              </PropBody>
            </Properties>
          </RightCol>
        </Main>

        <StatusBar>
          <Hint><Icon n="mouseL" s={22} />改变帧数</Hint>
          <Hint><Icon n="mouseM" s={22} />平移视图</Hint>
          <Hint><Icon n="mouseR" s={22} />动画摄影表</Hint>
          <Credit><Version>4.0.2</Version>CSDN @qq_64553484</Credit>
        </StatusBar>
      </Page>
      <Scribble viewBox="0 690 860 240" aria-hidden>
        <g fill="none" stroke="#e81e1e" strokeWidth="6" strokeLinecap="round" strokeLinejoin="round">
          <path d="M13 740C5 737 5 735 6 730C16 706 34 701 44 702C64 704 79 722 78 733C77 752 64 758 56 757C42 756 30 750 15 749" />
          <path d="M795 906C801 906 804 920 810 919C816 918 822 905 832 896" />
        </g>
      </Scribble>
    </>
  );
}
